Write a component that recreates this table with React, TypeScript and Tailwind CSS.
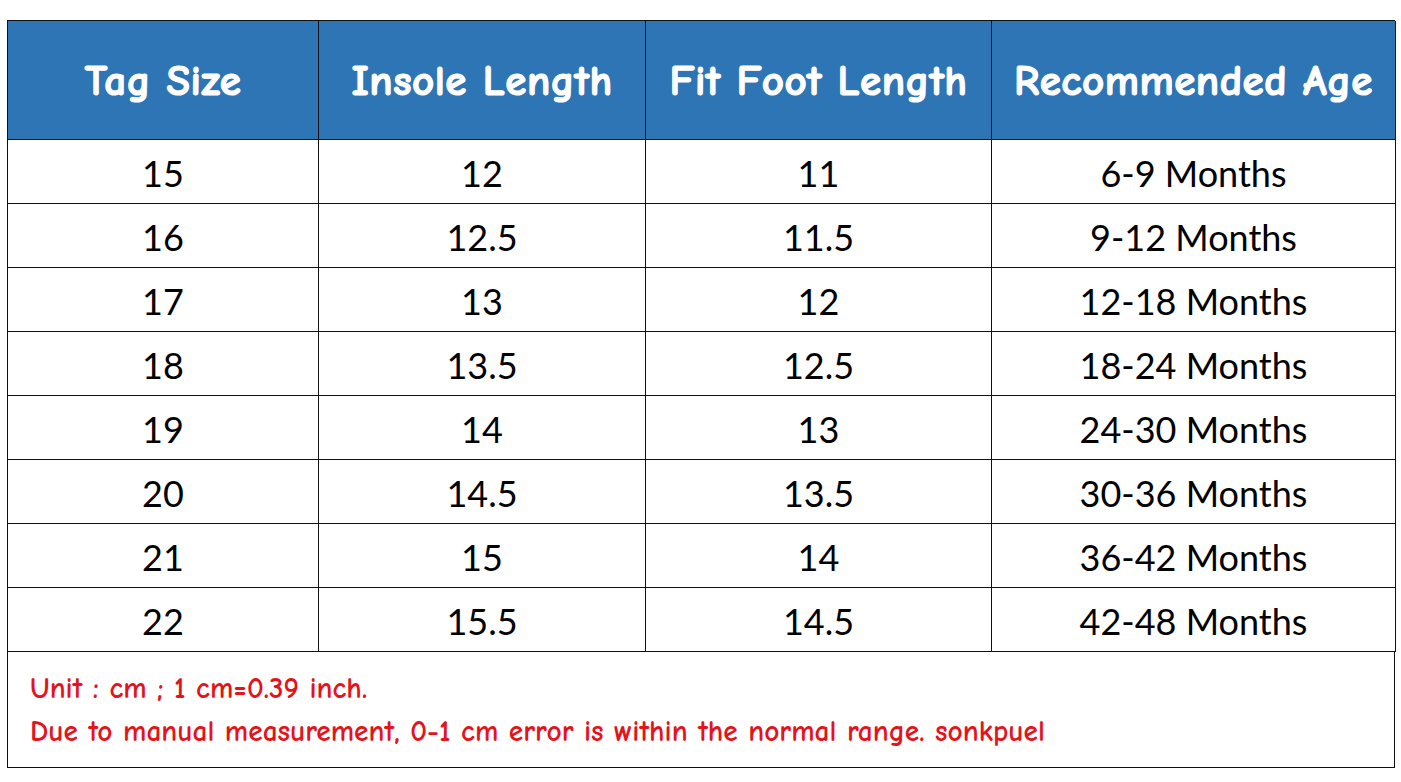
const headers = ["Tag Size", "Insole Length", "Fit Foot Length", "Recommended Age"];

const rows: [string, string, string, string][] = [
  ["15", "12", "11", "6-9 Months"],
  ["16", "12.5", "11.5", "9-12 Months"],
  ["17", "13", "12", "12-18 Months"],
  ["18", "13.5", "12.5", "18-24 Months"],
  ["19", "14", "13", "24-30 Months"],
  ["20", "14.5", "13.5", "30-36 Months"],
  ["21", "15", "14", "36-42 Months"],
  ["22", "15.5", "14.5", "42-48 Months"],
];

const comic = "font-['Comic_Sans_MS','Comic_Neue',Lato,sans-serif]";

export default function App() {
  return (
    <div className="w-[1401px] h-[782px] bg-white pt-[20px] pl-[7px]">
      <div className="w-[1388px] border-l border-t border-[#111]">
        <div className="grid grid-cols-[311px_327px_346px_404px]">
          {headers.map((h) => (
            <div
              key={h}
              className={`h-[119px] bg-[#2e75b6] border-r border-b border-[#111] flex items-center justify-center pt-[2px] text-white text-[43px] font-bold tracking-[0.5px] [-webkit-text-stroke:1.2px_white] whitespace-nowrap ${comic}`}
            >
              {h}
            </div>
          ))}
          {rows.map((r) =>
            r.map((c, i) => (
              <div
                key={r[0] + "-" + i}
                className="h-[64px] border-r border-b border-[#111] flex items-center justify-center text-[36px] text-black font-['Lato',sans-serif] pt-[2px]"
              >
                {c}
              </div>
            )),
          )}
        </div>
        <div
          className={`h-[116px] border-r border-b border-[#111] pl-[22px] pt-[15px] text-[#e3141b] text-[29.4px] leading-[43px] font-bold ${comic}`}
        >
          <p>Unit : cm ; 1 cm=0.39 inch.</p>
          <p>Due to manual measurement, 0-1 cm error is within the normal range. sonkpuel</p>
        </div>
      </div>
    </div>
  );
}
